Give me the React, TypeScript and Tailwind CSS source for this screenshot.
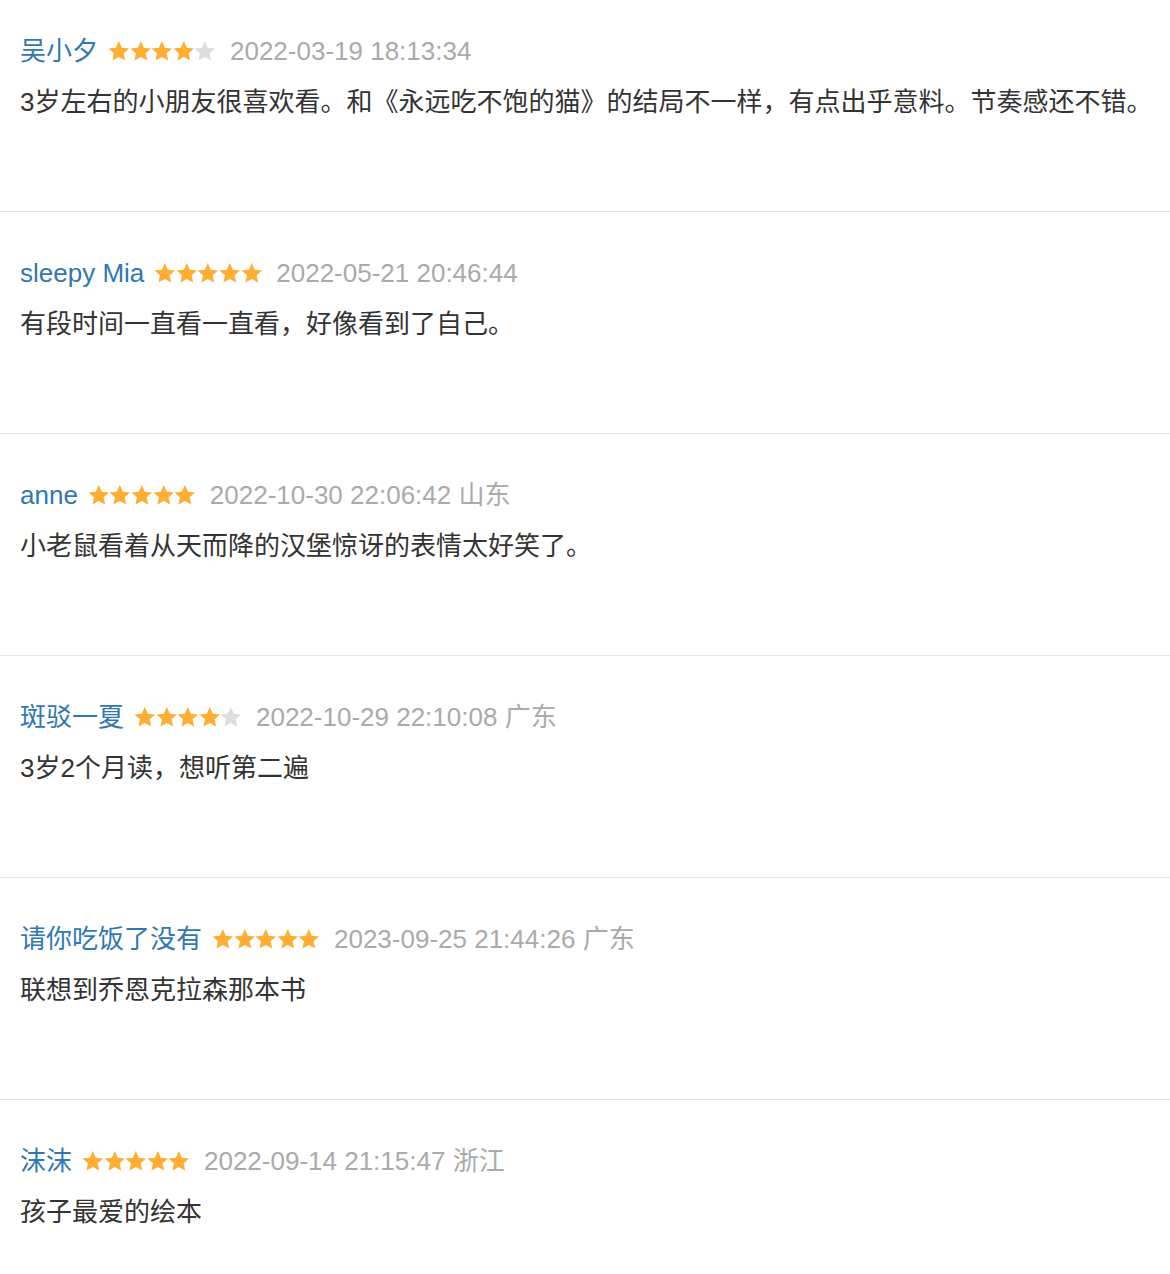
import React from 'react'

interface Review {
    name: string
    stars: number
    time: string
    place?: string
    text: string
}

const reviews: Review[] = [
    {
        name: '吴小夕',
        stars: 4,
        time: '2022-03-19 18:13:34',
        text: '3岁左右的小朋友很喜欢看。和《永远吃不饱的猫》的结局不一样，有点出乎意料。节奏感还不错。',
    },
    { name: 'sleepy Mia', stars: 5, time: '2022-05-21 20:46:44', text: '有段时间一直看一直看，好像看到了自己。' },
    { name: 'anne', stars: 5, time: '2022-10-30 22:06:42', place: '山东', text: '小老鼠看着从天而降的汉堡惊讶的表情太好笑了。' },
    { name: '斑驳一夏', stars: 4, time: '2022-10-29 22:10:08', place: '广东', text: '3岁2个月读，想听第二遍' },
    { name: '请你吃饭了没有', stars: 5, time: '2023-09-25 21:44:26', place: '广东', text: '联想到乔恩克拉森那本书' },
    { name: '沫沫', stars: 5, time: '2022-09-14 21:15:47', place: '浙江', text: '孩子最爱的绘本' },
]

const Star = ({ on }: { on: boolean }) => (
    <svg width="21.6" height="22" viewBox="0 0 22 22" className="shrink-0">
        <polygon
            points="11,0.8 14.06,7.59 21.46,8.4 15.95,13.41 17.47,20.7 11,17 4.53,20.7 6.05,13.41 0.54,8.4 7.94,7.59"
            fill={on ? '#ffad33' : '#dddddd'}
        />
    </svg>
)

const App = () => {
    return (
        <div
            className="w-[1170px] bg-white"
            style={{ fontFamily: '"Liberation Sans", Arial, "Noto Sans CJK SC", sans-serif' }}
        >
            {reviews.map((item, index) => (
                <div
                    key={item.name}
                    className={`pl-5 pb-[89px] ${index == 0 ? 'pt-[31px]' : 'border-t border-[#e6e6e6] pt-[41px]'}`}
                >
                    <div className="flex h-10 items-center text-[26px] leading-10">
                        <span className="text-[#2f78b4]">{item.name}</span>
                        <div className="ml-[10px] flex items-center">
                            {[0, 1, 2, 3, 4].map((i) => (
                                <Star key={i} on={i < item.stars} />
                            ))}
                        </div>
                        <span className="ml-[14px] text-[#aaaaaa]">
                            {item.time}
                            {item.place ? ' ' + item.place : ''}
                        </span>
                    </div>
                    <p className="mt-[11px] whitespace-nowrap text-[26px] leading-10 text-[#333333]">{item.text}</p>
                </div>
            ))}
        </div>
    )
}

export default App
